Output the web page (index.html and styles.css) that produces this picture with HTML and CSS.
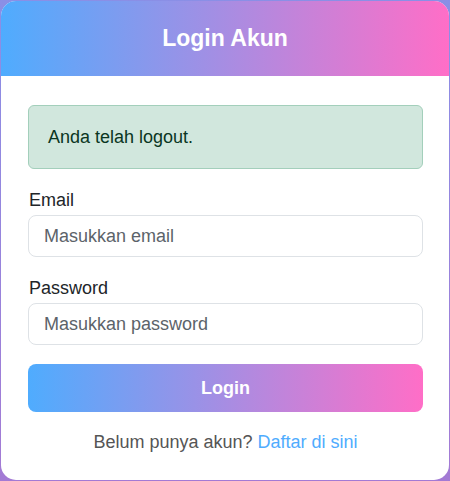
FILE: index.html
```html
<!DOCTYPE html>
<html lang="id">
<head>
<meta charset="utf-8">
<title>Login Akun</title>
<link rel="stylesheet" href="styles.css">
</head>
<body>
<div class="card">
  <div class="card-header"><h2>Login Akun</h2></div>
  <div class="card-body">
    <div class="alert">Anda telah logout.</div>
    <form class="form">
      <div class="field">
        <label for="email">Email</label>
        <input id="email" type="email" placeholder="Masukkan email">
      </div>
      <div class="field">
        <label for="password">Password</label>
        <input id="password" type="password" placeholder="Masukkan password">
      </div>
      <button type="button" class="btn">Login</button>
    </form>
    <p class="footer">Belum punya akun? <a href="#">Daftar di sini</a></p>
  </div>
</div>
</body>
</html>
```
FILE: styles.css
```css
html, body {
  margin: 0;
  height: 481px;
  overflow: hidden;
}
body {
  background: linear-gradient(180deg, #8a8fe6 0%, #a37ad4 100%);
  font-family: "Liberation Sans", Arial, sans-serif;
  padding: 1px;
  box-sizing: border-box;
}
.card {
  width: 448px;
  height: 479px;
  background: #fff;
  border-radius: 15px;
  overflow: hidden;
}
.card-header {
  height: 75px;
  background: linear-gradient(90deg, #4facfe 0%, #ff6ec7 100%);
  display: flex;
  align-items: center;
  justify-content: center;
}
.card-header h2 {
  margin: 0;
  color: #fff;
  font-size: 23px;
  font-weight: bold;
}
.card-body {
  padding: 29px 26px 0 27px;
}
.alert {
  height: 64px;
  box-sizing: border-box;
  background: #d1e7dd;
  border: 1px solid #a3cfbb;
  border-radius: 6px;
  color: #0a3622;
  font-size: 18px;
  padding: 0 19px;
  display: flex;
  align-items: center;
}
.form {
  margin-top: 19px;
  display: flex;
  flex-direction: column;
}
.field {
  display: flex;
  flex-direction: column;
  margin-bottom: 19px;
}
.field label {
  font-size: 18px;
  color: #212529;
  line-height: 24px;
  margin-bottom: 3px;
  padding-left: 1px;
}
.field input {
  height: 42px;
  box-sizing: border-box;
  border: 1px solid #dee2e6;
  border-radius: 8px;
  padding: 0 15px;
  font-family: "Liberation Sans", Arial, sans-serif;
  font-size: 18px;
  color: #212529;
}
.field input::placeholder {
  color: #5c636a;
}
.btn {
  height: 48px;
  border: none;
  border-radius: 8px;
  background: linear-gradient(90deg, #4facfe 0%, #ff6ec7 100%);
  color: #fff;
  font-family: "Liberation Sans", Arial, sans-serif;
  font-size: 18px;
  font-weight: bold;
}
.footer {
  margin: 20px 0 0;
  text-align: center;
  font-size: 18px;
  color: #555;
}
.footer a {
  color: #4facfe;
  text-decoration: none;
}
```
